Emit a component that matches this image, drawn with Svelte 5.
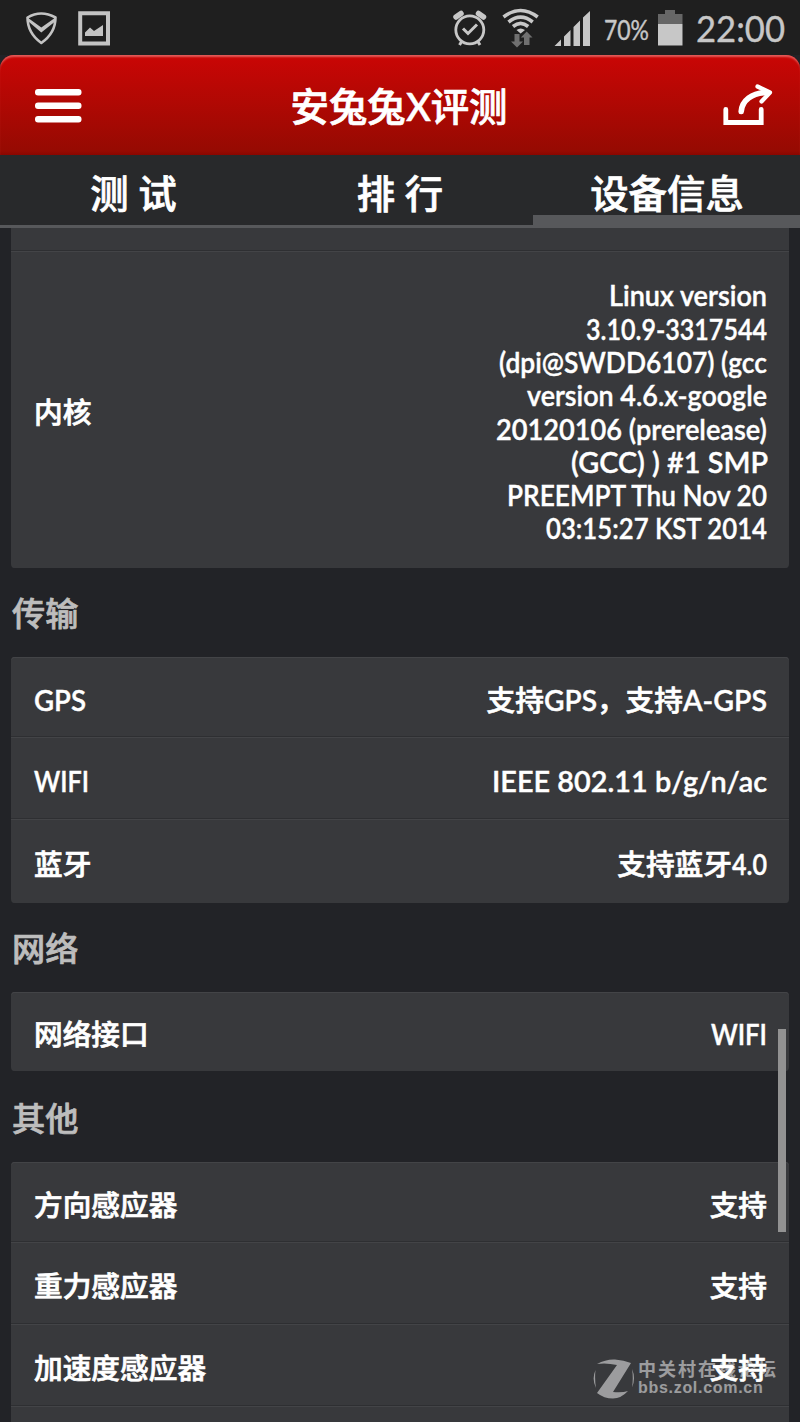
<script>
  const kernel = [
    ['Linux version', 158],
    ['3.10.9-3317544', 181],
    ['(dpi@SWDD6107) (gcc', 268],
    ['version 4.6.x-google', 240],
    ['20120106 (prerelease)', 271],
    ['(GCC) ) #1 SMP', 197],
    ['PREEMPT Thu Nov 20', 260],
    ['03:15:27 KST 2014', 221]
  ];

  // A part is either a plain string or a [text, width] pair for condensed Latin.
  const groups = [
    {
      title: '传输',
      cls: 'transfer',
      rows: [
        { label: [['GPS', 52]], value: ['支持', ['GPS', 53], '，支持', ['A-GPS', 84]] },
        { label: [['WIFI', 55]], value: [['IEEE 802.11 b/g/n/ac', 275]] },
        { label: ['蓝牙'], value: ['支持蓝牙', ['4.0', 35]] }
      ]
    },
    {
      title: '网络',
      cls: 'network',
      rows: [{ label: ['网络接口'], value: [['WIFI', 56]] }]
    },
    {
      title: '其他',
      cls: 'other',
      rows: [
        { label: ['方向感应器'], value: ['支持'] },
        { label: ['重力感应器'], value: ['支持'] },
        { label: ['加速度感应器'], value: ['支持'] },
        { label: [], value: [] }
      ]
    }
  ];

  // Condenses the text to the given width.
  function fit(node, width) {
    const natural = node.getBoundingClientRect().width;
    node.style.transform = `scaleX(${width / natural})`;
  }
</script>

{#snippet latin(text, width)}<span class="latin" style="width:{width}px"><span use:fit={width}>{text}</span></span>{/snippet}

{#snippet parts(list)}{#each list as p}{#if typeof p === 'string'}{p}{:else}{@render latin(p[0], p[1])}{/if}{/each}{/snippet}

<div class="screen">
  <div class="status">
    <svg class="notes" width="90" height="40" viewBox="0 0 90 40" fill="none" stroke="#c3c3c3">
      <path d="M2.500 7.500Q16 -0.500 30.500 7.500Q30.500 23 16.300 33Q2.500 23 2.500 7.500Z" stroke-width="2.600" stroke-linejoin="round" />
      <path d="M2.500 7.500L16.300 17.500L30.500 7.500L29.500 12L16.300 22.500L4 12Z" fill="#c3c3c3" stroke="none" />
      <path d="M55.200 3.200H83V33.500H55.200Z" stroke-width="4" />
      <path d="M60 26V22.500L65 17.500L69 21L78 15V26Z" fill="#c3c3c3" stroke="none" />
    </svg>
    <div class="system">
      <svg width="36" height="42" viewBox="452 6 36 42" fill="none" stroke="#c7c7c7">
        <circle cx="469.800" cy="29.800" r="14" stroke-width="2.800" />
        <path d="M463 28.500L468 33.500L477 24.500" stroke-width="3" />
        <path d="M456 17L461 13.500M483.500 17L478.500 13.500" stroke-width="5.500" stroke-linecap="round" />
        <path d="M462 41L459.500 45M477.500 41L480 45" stroke-width="3" />
      </svg>
      <svg width="38" height="42" viewBox="502 6 38 42" fill="none">
        <g stroke="#c7c7c7" stroke-width="3.600">
          <path d="M503.500 17Q520.600 4 537.700 17" />
          <path d="M508.500 22Q520.600 12.300 532.700 22" />
          <path d="M513 26.500Q520.600 20.100 528.200 26.500" />
        </g>
        <path d="M516.500 30Q520.600 26.800 525 30L520.600 33.500Z" fill="#c7c7c7" />
        <path d="M514.500 34H519.500V41.500H523L517 47.500L511 41.500H514.500ZM524 45H529.500V37.500H532.500L526.700 31.500L520.800 37.500H524Z" fill="#707070" />
      </svg>
      <svg class="signal" width="37" height="42" viewBox="554 6 37 42" fill="#c7c7c7">
        <path d="M554.500 46L561 39.500V46ZM564 36.500L570.500 30V46H564ZM573.500 27L580 20.500V46H573.500ZM583 17.500L590 11V46H583Z" />
      </svg>
      <span class="percent">{@render latin('70%', 45)}</span>
      <svg class="battery" width="26" height="42" viewBox="657 6 26 42">
        <path d="M658 14H665V10H675V14H682.500V24H658Z" fill="#666" />
        <path d="M658 24H682.500V45.500H658Z" fill="#c7c7c7" />
      </svg>
      <span class="time">{@render latin('22:00', 89)}</span>
    </div>
  </div>

  <header>
    <svg width="48" height="40" viewBox="0 0 48 40" fill="#fff">
      <rect x="0" y="4" width="46.500" height="6.500" rx="3" />
      <rect x="0" y="17.500" width="46.500" height="6.500" rx="3" />
      <rect x="0" y="31" width="46.500" height="6.500" rx="3" />
    </svg>
    <h1>安兔兔{@render latin('X', 25)}评测</h1>
    <svg width="50" height="44" viewBox="724 82 50 44" fill="none" stroke="#fff" stroke-linecap="round" stroke-linejoin="round">
      <path d="M726.800 108.500V121.500H762.200V108.500" stroke-width="4.800" stroke-linejoin="miter" />
      <path d="M742.200 110.500C743 99.500 753 92 767 91.500" stroke-width="5.600" />
      <path d="M758.500 85.500L771 91.500L762.500 100.500" stroke-width="4.200" />
    </svg>
  </header>

  <nav>
    <div class="tab">测 试</div>
    <div class="tab">排 行</div>
    <div class="tab active">设备信息</div>
  </nav>

  <main>
    <section class="card first">
      <div class="row stub"></div>
      <div class="row kernel">
        <span>内核</span>
        <div class="lines">
          {#each kernel as [text, width]}
            <div>{@render latin(text, width)}</div>
          {/each}
        </div>
      </div>
    </section>
    {#each groups as g}
      <h2 class={g.cls}>{g.title}</h2>
      <section class="card {g.cls}">
        {#each g.rows as r}
          <div class="row">
            <span>{@render parts(r.label)}</span>
            <span>{@render parts(r.value)}</span>
          </div>
        {/each}
      </section>
    {/each}
  </main>

  <div class="scrollbar"></div>
  <div class="watermark">
    <svg width="42" height="42" viewBox="593 1358 42 42">
      <path d="M597 1364Q606 1359 615 1359.500Q624 1360 631 1363L613 1392Q622 1393 628 1391Q621 1398.500 613 1398.500Q604 1398.500 597 1393L617 1365Q606 1362.500 597 1364ZM595.500 1370Q591.500 1379 596 1388Q594.500 1379 595.500 1370ZM632 1369Q636 1378 632 1387.500Q633.500 1378 632 1369Z" fill="#fff" />
    </svg>
    <div>
      <div class="forum">中关村在线论坛</div>
      <div class="url">bbs.zol.com.cn</div>
    </div>
  </div>
</div>

<style>
  :global(body) {
    margin: 0;
    background: #222327;
  }
  .screen {
    position: relative;
    width: 800px;
    height: 1422px;
    overflow: hidden;
    display: flex;
    flex-direction: column;
    background: #222327;
    color: #fff;
    font-family: Lato, 'Noto Sans CJK SC', sans-serif;
    font-size: 28.7px;
    font-weight: 500;
    -webkit-text-stroke: 0.700px currentColor;
  }
  svg {
    display: block;
    flex: none;
  }
  .latin {
    display: inline-block;
    white-space: nowrap;
    font-weight: 600;
    -webkit-text-stroke-width: 0.400px;
  }
  .latin > span {
    display: inline-block;
    transform-origin: 0 50%;
  }
  .status {
    height: 55px;
    flex: none;
    box-sizing: border-box;
    background: #1f1f1f;
    display: flex;
    justify-content: space-between;
    padding: 6px 14px 0 25px;
    color: #c7c7c7;
  }
  .notes {
    margin-top: 4px;
  }
  .system {
    display: flex;
    height: 42px;
    line-height: 42px;
  }
  .system svg + svg {
    margin-left: 14px;
  }
  .percent {
    margin: 3px 8px 0 13px;
    font-size: 26px;
  }
  .time {
    margin: 1px 1px 0 13px;
    font-size: 37px;
  }
  .percent :global(.latin),
  .time :global(.latin) {
    font-weight: 400;
  }
  header {
    height: 100px;
    flex: none;
    box-sizing: border-box;
    border-radius: 14px 14px 0 0;
    background: linear-gradient(#ca0605, #960a02 96%, #8a0600);
    box-shadow: inset 0 3px 2px -1px #e25b59;
    display: flex;
    justify-content: space-between;
    align-items: center;
    padding: 0 27px 0 35px;
  }
  h1 {
    margin: 2px 8px 0 0;
    font-size: 38.400px;
    font-weight: 500;
    line-height: 56px;
  }
  nav {
    height: 73px;
    flex: none;
    box-sizing: border-box;
    display: grid;
    grid-template-columns: 267px 266px 267px;
    background: #28292b;
    font-size: 38.400px;
    line-height: 76px;
    text-align: center;
  }
  .tab {
    box-sizing: border-box;
    height: 73px;
    border-bottom: 3px solid #57585b;
  }
  .active {
    border-bottom-width: 13px;
    padding-left: 1px;
  }
  main {
    padding: 0 11px;
  }
  .card {
    background: #38393c;
    border-radius: 4px;
    overflow: hidden;
    box-shadow: inset 0 1px #434447;
  }
  .row {
    box-sizing: border-box;
    height: 82px;
    padding: 6px 22px 0 23px;
    display: flex;
    justify-content: space-between;
    align-items: center;
    line-height: 40px;
    border-top: 1px solid #434447;
    border-bottom: 1px solid #2e2f32;
  }
  .row:first-child {
    height: 80px;
    padding-top: 5px;
  }
  .row:last-child {
    border-bottom-color: #38393c;
  }
  .first {
    border-radius: 0 0 4px 4px;
    box-shadow: none;
  }
  .row.stub {
    height: 23px;
    border-top: 0;
  }
  .row.kernel {
    height: 317px;
    padding-top: 4px;
  }
  .lines {
    line-height: 33.300px;
    text-align: right;
    padding-top: 2px;
  }
  .lines > div {
    height: 33.300px;
  }
  .transfer .row:last-child {
    height: 84px;
    padding-bottom: 1px;
  }
  .network .row:last-child {
    height: 79px;
    padding-top: 4px;
  }
  h2 {
    margin: 0 1px;
    height: 89px;
    line-height: 91px;
    font-size: 33.200px;
    font-weight: 500;
    color: #bdbdbd;
  }
  h2.other {
    height: 91px;
    line-height: 95px;
  }
  .scrollbar {
    position: absolute;
    left: 778px;
    top: 1029px;
    width: 8px;
    height: 203px;
    background: #929292;
  }
  .watermark {
    position: absolute;
    left: 593px;
    top: 1358px;
    display: flex;
    gap: 3px;
    color: #fff;
    opacity: 0.5;
    white-space: nowrap;
    -webkit-text-stroke-width: 0;
  }
  .forum {
    font: 700 18px/21px 'Noto Sans CJK SC', sans-serif;
    letter-spacing: 2px;
  }
  .url {
    font: 700 16px/18px 'Liberation Sans', sans-serif;
    letter-spacing: 0.700px;
  }
</style>
